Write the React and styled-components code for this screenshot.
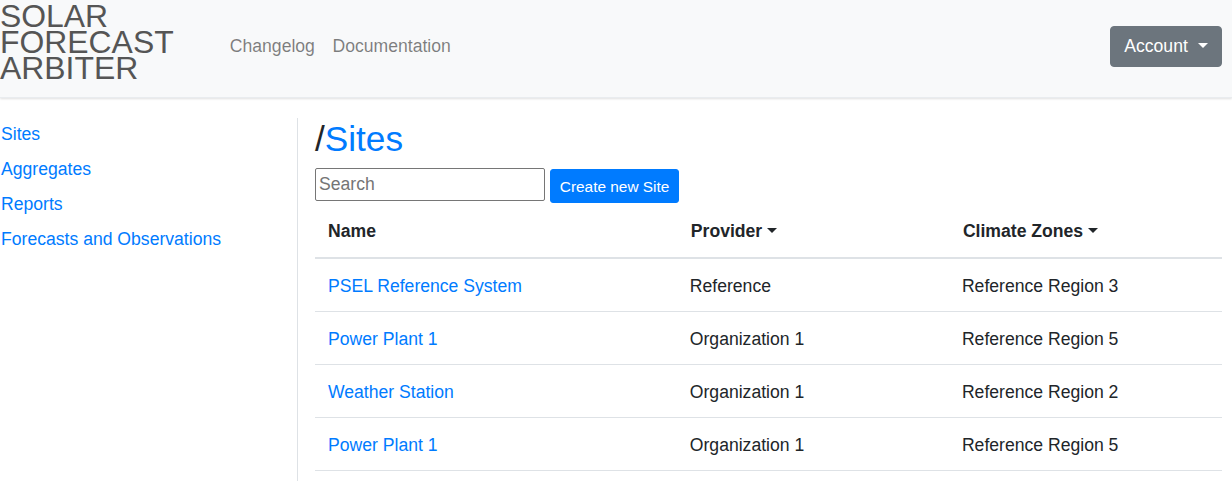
import React from "react";
import styled, { createGlobalStyle } from "styled-components";

const Global = createGlobalStyle`
  html { font-size: 17.6px; }
  body {
    margin: 0;
    font-family: "Liberation Sans", Arial, sans-serif;
    font-size: 17.6px;
    line-height: 1.5;
    color: #212529;
    background: #fff;
  }
  * { box-sizing: border-box; }
`;

const Navbar = styled.nav`
  display: flex;
  align-items: center;
  height: 98px;
  padding: 0 10px 4px 0;
  background: #f8f9fa;
  box-shadow: 0 1px 2px rgba(0, 0, 0, 0.12);
  border-bottom: 1px solid #e9ecef;
`;

const Brand = styled.a`
  display: block;
  width: 221px;
  margin-bottom: 9px;
  font-size: 31.9px;
  line-height: 26px;
  color: #555;
  text-decoration: none;
`;

const NavLinks = styled.div`
  display: flex;
  flex: 1;
`;

const NavLink = styled.a`
  padding: 8.8px;
  color: rgba(0, 0, 0, 0.5);
  text-decoration: none;
`;

const Caret = styled.span`
  display: inline-block;
  margin-left: ${(p) => p.$gap || "0.255em"};
  vertical-align: 0.255em;
  border-top: 0.3em solid;
  border-right: 0.3em solid transparent;
  border-left: 0.3em solid transparent;
  border-bottom: 0;
`;

const AccountButton = styled.button`
  font-family: inherit;
  font-size: 17.6px;
  line-height: 1.5;
  padding: 6.6px 13.2px;
  color: #fff;
  background: #6c757d;
  border: 1px solid #6c757d;
  border-radius: 4px;
`;

const Body = styled.div`
  display: flex;
  padding-top: 20px;
`;

const Sidebar = styled.aside`
  width: 298px;
  flex: none;
  border-right: 1px solid #dee2e6;
  padding-left: 1px;
  min-height: 364px;
  display: flex;
  flex-direction: column;
`;

const SideLink = styled.a`
  display: block;
  padding: 3.3px 0 5.3px;
  color: #007bff;
  text-decoration: none;
`;

const Main = styled.main`
  flex: 1;
  padding: 0 10px 0 17px;
`;

const Title = styled.h2`
  margin: 0 0 8px;
  font-size: 35.2px;
  font-weight: 400;
  line-height: 1.2;
  color: #212529;
`;

const TitleLink = styled.a`
  color: #007bff;
  text-decoration: none;
`;

const Toolbar = styled.div`
  display: flex;
  align-items: flex-start;
  gap: 5px;
`;

const SearchInput = styled.input`
  width: 230px;
  height: 33px;
  padding: 1px 3px;
  font-family: inherit;
  font-size: 17.6px;
  border: 1px solid #767676;
  border-radius: 2px;
  color: #212529;
  &::placeholder { color: #757575; }
`;

const CreateButton = styled.button`
  margin-top: 1px;
  font-family: inherit;
  font-size: 15.4px;
  line-height: 1.5;
  padding: 4.4px 8.8px;
  color: #fff;
  background: #007bff;
  border: 1px solid #007bff;
  border-radius: 3px;
`;

const Table = styled.table`
  width: 100%;
  margin-top: 2px;
  border-collapse: collapse;
  table-layout: fixed;
`;

const Th = styled.th`
  width: ${(p) => p.$w};
  padding: 13px;
  line-height: 26px;
  text-align: left;
  font-weight: 700;
  border-bottom: 2px solid #dee2e6;
`;

const Td = styled.td`
  padding: 14px 13px 12px ${(p) => (p.$first ? "13px" : "12px")};
  line-height: 26px;
  border-bottom: 1px solid #dee2e6;
`;

const CellLink = styled.a`
  color: #007bff;
  text-decoration: none;
`;

const rows = [
  ["PSEL Reference System", "Reference", "Reference Region 3"],
  ["Power Plant 1", "Organization 1", "Reference Region 5"],
  ["Weather Station", "Organization 1", "Reference Region 2"],
  ["Power Plant 1", "Organization 1", "Reference Region 5"],
];

export default function App() {
  return (
    <>
      <Global />
      <Navbar>
        <Brand href="#">
          SOLAR
          <br />
          FORECAST
          <br />
          ARBITER
        </Brand>
        <NavLinks>
          <NavLink href="#">Changelog</NavLink>
          <NavLink href="#">Documentation</NavLink>
        </NavLinks>
        <AccountButton>
          Account
          <Caret $gap="10px" />
        </AccountButton>
      </Navbar>
      <Body>
        <Sidebar>
          <SideLink href="#">Sites</SideLink>
          <SideLink href="#">Aggregates</SideLink>
          <SideLink href="#">Reports</SideLink>
          <SideLink href="#">Forecasts and Observations</SideLink>
        </Sidebar>
        <Main>
          <Title>
            /<TitleLink href="#">Sites</TitleLink>
          </Title>
          <Toolbar>
            <SearchInput placeholder="Search" />
            <CreateButton>Create new Site</CreateButton>
          </Toolbar>
          <Table>
            <thead>
              <tr>
                <Th $w="40%">Name</Th>
                <Th $w="30%">
                  Provider
                  <Caret />
                </Th>
                <Th $w="30%">
                  Climate Zones
                  <Caret />
                </Th>
              </tr>
            </thead>
            <tbody>
              {rows.map((r, i) => (
                <tr key={i}>
                  <Td $first>
                    <CellLink href="#">{r[0]}</CellLink>
                  </Td>
                  <Td>{r[1]}</Td>
                  <Td>{r[2]}</Td>
                </tr>
              ))}
            </tbody>
          </Table>
        </Main>
      </Body>
    </>
  );
}
